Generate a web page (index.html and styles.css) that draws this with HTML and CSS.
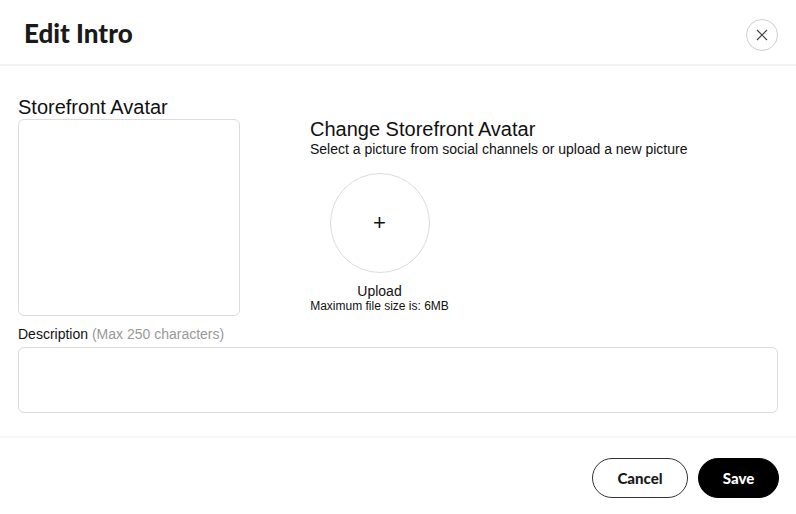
FILE: index.html
```html
<!DOCTYPE html>
<html lang="en">

<head>
    <meta charset="UTF-8">
    <meta name="viewport" content="width=device-width, initial-scale=1.0">
    <title>Edit Intro</title>
    <link rel="stylesheet" href="styles.css">
</head>

<body>
    <div class="modal">
        <header class="modal-header">
            <h1>Edit Intro</h1>
            <button class="close-btn" aria-label="Close">
                <svg width="12" height="12" viewBox="0 0 12 12">
                    <path d="M1 1 L11 11 M11 1 L1 11" stroke="#444" stroke-width="1.2" fill="none" />
                </svg>
            </button>
        </header>

        <main class="modal-body">
            <div class="avatar-row">
                <div class="avatar-col">
                    <label class="field-label big">Storefront Avatar</label>
                    <div class="avatar-box"></div>
                </div>
                <div class="change-col">
                    <h2>Change Storefront Avatar</h2>
                    <p class="hint">Select a picture from social channels or upload a new picture</p>
                    <div class="upload">
                        <div class="upload-circle">+</div>
                        <div class="upload-label">Upload</div>
                        <div class="upload-size">Maximum file size is: 6MB</div>
                    </div>
                </div>
            </div>

            <label class="field-label desc-label">Description <span class="muted">(Max 250 characters)</span></label>
            <textarea class="description"></textarea>
        </main>

        <footer class="modal-footer">
            <button class="btn btn-outline">Cancel</button>
            <button class="btn btn-dark">Save</button>
        </footer>
    </div>
</body>
</html>
```

FILE: styles.css
```css
body {
    margin: 0;
    padding: 0;
    background-color: white;
    font-family: 'Liberation Sans', Arial, sans-serif;
    color: #111;
}

.modal {
    width: 796px;
}

.modal-header {
    height: 66px;
    display: flex;
    align-items: center;
    justify-content: space-between;
    padding: 2px 18px 0 24px;
    border-bottom: 2px solid #f2f2f2;
    box-sizing: border-box;
}

.modal-header h1 {
    margin: 0;
    font-family: 'Lato', sans-serif;
    font-weight: 900;
    font-size: 26px;
    color: #1a1a1a;
}

.close-btn {
    width: 32px;
    height: 32px;
    border-radius: 50%;
    border: 1px solid #cfcfcf;
    background: white;
    display: flex;
    align-items: center;
    justify-content: center;
    padding: 0;
    margin-top: 4px;
}

.modal-body {
    padding: 30px 18px 23px 18px;
    border-bottom: 2px solid #f7f7f7;
}

.avatar-row {
    display: flex;
    gap: 70px;
}

.avatar-col {
    width: 222px;
}

.field-label {
    display: block;
    font-size: 14px;
    line-height: 16px;
    margin-bottom: 5px;
}

.field-label.big {
    font-size: 20px;
    line-height: 22px;
    margin-bottom: 1px;
}

.desc-label {
    margin-top: 10px;
}

.muted {
    color: #999;
}

.avatar-box {
    height: 197px;
    box-sizing: border-box;
    border: 1px solid #dcdcdc;
    border-radius: 6px;
}

.change-col {
    padding-top: 22px;
}

.change-col h2 {
    margin: 0;
    font-size: 20px;
    font-weight: normal;
    line-height: 23px;
}

.hint {
    margin: 0;
    font-size: 14px;
    line-height: 16px;
}

.upload {
    width: 139px;
    display: flex;
    flex-direction: column;
    align-items: center;
    margin-top: 16px;
}

.upload-circle {
    width: 100px;
    height: 100px;
    box-sizing: border-box;
    border: 1px solid #dcdcdc;
    border-radius: 50%;
    display: flex;
    align-items: center;
    justify-content: center;
    font-size: 22px;
}

.upload-label {
    margin-top: 10px;
    font-size: 14px;
    line-height: 16px;
}

.upload-size {
    font-size: 12px;
    line-height: 14px;
    white-space: nowrap;
}

.description {
    display: block;
    width: 760px;
    height: 66px;
    box-sizing: border-box;
    border: 1px solid #dcdcdc;
    border-radius: 6px;
    resize: none;
    margin: 0;
}

.modal-footer {
    display: flex;
    justify-content: flex-end;
    gap: 10px;
    padding: 20px 17px;
}

.btn {
    height: 40px;
    border-radius: 20px;
    font-family: 'Lato', sans-serif;
    font-weight: 900;
    font-size: 15px;
    cursor: pointer;
}

.btn-outline {
    width: 96px;
    background: white;
    border: 1px solid #333;
    color: #1a1a1a;
}

.btn-dark {
    width: 81px;
    background: black;
    border: 1px solid black;
    color: white;
}
```
